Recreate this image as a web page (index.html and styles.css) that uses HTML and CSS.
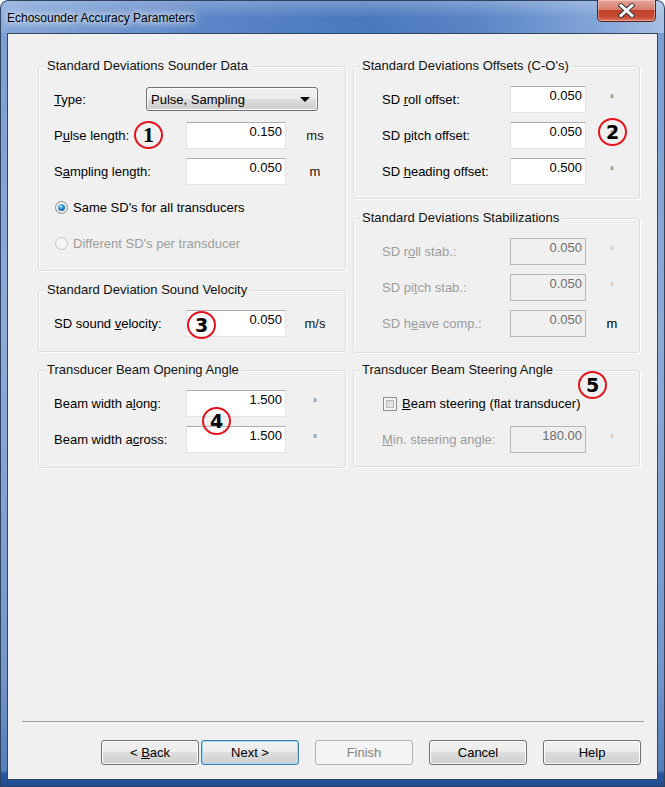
FILE: index.html
```html
<!DOCTYPE html>
<html lang="en">
  <head>
    <meta charset="UTF-8" />
    <title>Echosounder Accuracy Parameters</title>
    <link rel="stylesheet" href="styles.css">
  </head>
  <body>
    <div class="window">
      <div class="titlebar">
        <span class="title">Echosounder Accuracy Parameters</span>
        <div class="close-btn">
          <svg width="17" height="15" viewBox="0 0 17 15">
            <path d="M3 2.5 L14 12.5 M14 2.5 L3 12.5" stroke="#3b3b3b" stroke-width="5" stroke-linecap="square" />
            <path d="M3 2.5 L14 12.5 M14 2.5 L3 12.5" stroke="#fff" stroke-width="3" stroke-linecap="square" />
          </svg>
        </div>
      </div>

      <div class="client">
        <div class="groups">
          <div class="stack">
            <div class="group group-left g-sounder">
              <div class="group-title">Standard Deviations Sounder Data</div>
              <div class="rows">
                <div class="row">
                  <span class="lbl lbl-type"><u>T</u>ype:</span>
                  <div class="combo"><span>Pulse, Sampling</span><span class="arrow"></span></div>
                </div>
                <div class="row">
                  <span class="lbl">P<u>u</u>lse length:</span>
                  <div class="field">0.150</div>
                  <span class="unit">ms</span>
                </div>
                <div class="row">
                  <span class="lbl">S<u>a</u>mpling length:</span>
                  <div class="field">0.050</div>
                  <span class="unit">m</span>
                </div>
                <div class="row">
                  <span class="radio checked"></span>
                  <span>Same SD's for all transducers</span>
                </div>
                <div class="row disabled">
                  <span class="radio"></span>
                  <span>Different SD's per transducer</span>
                </div>
              </div>
            </div>

            <div class="group group-left g-velocity">
              <div class="group-title">Standard Deviation Sound Velocity</div>
              <div class="rows">
                <div class="row">
                  <span class="lbl">SD sound <u>v</u>elocity:</span>
                  <div class="field">0.050</div>
                  <span class="unit">m/s</span>
                </div>
              </div>
            </div>
          </div>

          <div class="stack">
            <div class="group group-right g-offsets">
              <div class="group-title">Standard Deviations Offsets (C-O's)</div>
              <div class="rows">
                <div class="row">
                  <span class="lbl">SD <u>r</u>oll offset:</span>
                  <div class="field">0.050</div>
                  <span class="unit deg">°</span>
                </div>
                <div class="row">
                  <span class="lbl">SD <u>p</u>itch offset:</span>
                  <div class="field">0.050</div>
                  <span class="unit deg">°</span>
                </div>
                <div class="row">
                  <span class="lbl">SD <u>h</u>eading offset:</span>
                  <div class="field">0.500</div>
                  <span class="unit deg">°</span>
                </div>
              </div>
            </div>

            <div class="group group-right g-stab">
              <div class="group-title">Standard Deviations Stabilizations</div>
              <div class="rows">
                <div class="row disabled">
                  <span class="lbl">SD r<u>o</u>ll stab.:</span>
                  <div class="field">0.050</div>
                  <span class="unit deg">°</span>
                </div>
                <div class="row disabled">
                  <span class="lbl">SD pi<u>t</u>ch stab.:</span>
                  <div class="field">0.050</div>
                  <span class="unit deg">°</span>
                </div>
                <div class="row disabled">
                  <span class="lbl">SD h<u>e</u>ave comp.:</span>
                  <div class="field">0.050</div>
                  <span class="unit unit-on">m</span>
                </div>
              </div>
            </div>
          </div>

          <div class="group group-left g-opening">
            <div class="group-title">Transducer Beam Opening Angle</div>
            <div class="rows">
              <div class="row">
                <span class="lbl">Beam width a<u>l</u>ong:</span>
                <div class="field">1.500</div>
                <span class="unit deg">°</span>
              </div>
              <div class="row">
                <span class="lbl">Beam width a<u>c</u>ross:</span>
                <div class="field">1.500</div>
                <span class="unit deg">°</span>
              </div>
            </div>
          </div>

          <div class="group group-right g-steering">
            <div class="group-title">Transducer Beam Steering Angle</div>
            <div class="rows">
              <div class="row">
                <span class="checkbox"></span>
                <span><u>B</u>eam steering (flat transducer)</span>
              </div>
              <div class="row disabled">
                <span class="lbl"><u>M</u>in. steering angle:</span>
                <div class="field">180.00</div>
                <span class="unit deg">°</span>
              </div>
            </div>
          </div>
        </div>

        <div class="footer">
          <div class="separator"></div>
          <div class="buttons">
            <div class="btn btn-back"><span>&lt; <u>B</u>ack</span></div>
            <div class="btn btn-default"><span>Next &gt;</span></div>
            <div class="btn btn-disabled"><span>Finish</span></div>
            <div class="btn"><span>Cancel</span></div>
            <div class="btn"><span>Help</span></div>
          </div>
        </div>
      </div>

      <!-- callout markers -->
      <span class="marker marker-serif" style="left: 134px; top: 121px;">1</span>
      <span class="marker" style="left: 598px; top: 118px;">2</span>
      <span class="marker" style="left: 187px; top: 311px;">3</span>
      <span class="marker" style="left: 202px; top: 407px;">4</span>
      <span class="marker" style="left: 578px; top: 371px;">5</span>
    </div>
  </body>
</html>
```

FILE: styles.css
```css
body {
  margin: 0;
  font-family: "Liberation Sans", Arial, sans-serif;
  font-size: 13px;
  color: #000;
  background-color: #fff;
}

.window {
  position: relative;
  width: 665px;
  height: 787px;
  box-sizing: border-box;
  padding: 0 7px 7px;
  border-radius: 8px 8px 0 0;
  background:
    linear-gradient(to bottom, rgba(255, 255, 255, 0.25), rgba(255, 255, 255, 0) 18px),
    linear-gradient(90deg, #86a8da 0%, #5b86c8 30%, #4b78bd 55%, #5a85c6 72%, #87a9da 92%, #a7c0e4 100%);
  background-size: 100% 33px, 100% 33px;
  background-repeat: no-repeat;
  background-color: #6f93c9;
  box-shadow: inset 0 0 0 1px #2d4161;
  overflow: hidden;
}

.window::after {
  content: "";
  position: absolute;
  left: 0;
  right: 0;
  top: 33px;
  bottom: 0;
  z-index: 0;
  border: 1px solid #2d4161;
  border-top: 0;
  background:
    linear-gradient(to bottom, rgba(0, 0, 0, 0) 738px, #2a58a0 740px, #1f4a8f 100%),
    linear-gradient(to bottom, #7c9ed2 0%, #8eabd6 40%, #7497cb 85%, #4f79b8 100%);
}

.titlebar {
  position: relative;
  z-index: 1;
  height: 33px;
  display: flex;
  justify-content: space-between;
  align-items: flex-start;
}

.title {
  margin-top: 11px;
  font-size: 12px;
  line-height: 14px;
  color: #000;
  text-shadow: 0 0 6px #fff, 0 0 10px rgba(255, 255, 255, 0.9), 0 0 14px rgba(255, 255, 255, 0.7);
}

.close-btn {
  width: 57px;
  height: 21px;
  margin-right: 2px;
  display: flex;
  align-items: center;
  justify-content: center;
  border: 1px solid #5b1f17;
  border-top: 0;
  border-radius: 0 0 5px 5px;
  background: linear-gradient(to bottom, #e6a495 0%, #d7806e 45%, #c23e27 50%, #c74a33 80%, #dc7560 100%);
  box-shadow: inset 0 0 0 1px rgba(255, 255, 255, 0.35);
}

.client {
  position: relative;
  z-index: 1;
  height: 747px;
  box-sizing: border-box;
  display: flex;
  flex-direction: column;
  border: 1px solid #34455e;
  background-color: #f0f0f0;
}

.groups {
  display: grid;
  grid-template-columns: 308px 287px;
  column-gap: 7px;
  row-gap: 17px;
  padding: 32px 0 0 30px;
}

.stack {
  display: flex;
  flex-direction: column;
  gap: 19px;
}

.group {
  box-sizing: border-box;
  border: 1px solid #d5dfe5;
  border-radius: 3px;
  box-shadow: inset 1px 1px 0 #fff, 1px 1px 0 #fff;
}

.group-title {
  display: table;
  margin: -9px 0 0 6px;
  padding: 0 2px;
  line-height: 16px;
  background-color: #f0f0f0;
  color: #111;
}

.rows {
  padding-top: 7px;
}

.row {
  height: 36px;
  display: flex;
  align-items: center;
}

.group-left .rows {
  padding-left: 15px;
}

.group-right .rows {
  padding-left: 28px;
}

.g-sounder { height: 205px; }
.g-velocity { height: 62px; }
.g-opening { height: 98px; }
.g-offsets { height: 133px; }
.g-stab { height: 135px; }
.g-steering { height: 97px; }

.lbl {
  flex: none;
  width: 132px;
}

.group-right .lbl {
  width: 128px;
}

.lbl-type {
  width: 92px !important;
}

.field {
  box-sizing: border-box;
  flex: none;
  width: 100px;
  height: 27px;
  padding: 1px 3px 0 0;
  line-height: 16px;
  text-align: right;
  background-color: #fff;
  border: 1px solid #e2e3ea;
  border-top-color: #abadb3;
}

.group-right .field {
  width: 76px;
}

.unit {
  flex: none;
  width: 58px;
  text-align: center;
  color: #111;
}

.group-right .unit {
  width: 52px;
}

.unit.deg {
  font-size: 10px;
  align-self: flex-start;
  margin-top: 12px;
  color: #3a4a66;
}

.combo {
  box-sizing: border-box;
  width: 172px;
  height: 24px;
  display: flex;
  align-items: center;
  justify-content: space-between;
  padding: 0 7px 0 4px;
  border: 1px solid #707070;
  border-radius: 3px;
  background: linear-gradient(to bottom, #f2f2f2 0%, #ebebeb 50%, #dddddd 50%, #cfcfcf 100%);
  box-shadow: inset 0 0 0 1px #fbfbfb;
}

.combo .arrow {
  width: 0;
  height: 0;
  border-left: 5px solid transparent;
  border-right: 5px solid transparent;
  border-top: 5px solid #000;
}

.radio {
  box-sizing: border-box;
  width: 13px;
  height: 13px;
  margin: 0 5px 0 1px;
  display: flex;
  align-items: center;
  justify-content: center;
  border: 1px solid #8d8d8d;
  border-radius: 50%;
  background: radial-gradient(circle at 50% 40%, #fff 20%, #d9d9d9 100%);
}

.radio.checked::after {
  content: "";
  width: 7px;
  height: 7px;
  border-radius: 50%;
  background: radial-gradient(circle at 40% 35%, #a9e6ff 0%, #2c89cf 45%, #0f3f72 100%);
}

.checkbox {
  box-sizing: border-box;
  width: 14px;
  height: 14px;
  margin: 2px 5px 0 1px;
  border: 1px solid #8f8f8f;
  background: linear-gradient(135deg, #cbcbcb, #f4f4f4);
  box-shadow: inset 0 0 0 2px #f3f3f3, inset 0 0 0 3px #b9b9b9;
}

.disabled {
  color: #9c9c9c;
}

.disabled .field {
  color: #6d6d6d;
  background-color: #f0f0f0;
  border-color: #b8b8b8;
}

.disabled .radio {
  border-color: #c4c4c4;
  background: #f4f4f4;
}

.disabled .unit.deg {
  color: #b0b0b0;
}

.disabled .unit-on {
  color: #000;
}

.footer {
  margin-top: auto;
  padding-bottom: 14px;
}

.separator {
  margin: 0 13px 0 14px;
  border-top: 1px solid #a0a0a0;
}

.buttons {
  display: flex;
  justify-content: flex-end;
  gap: 16px;
  padding: 18px 16px 0 0;
}

.btn {
  box-sizing: border-box;
  width: 98px;
  height: 25px;
  display: flex;
  align-items: center;
  justify-content: center;
  border: 1px solid #707070;
  border-radius: 3px;
  background: linear-gradient(to bottom, #f2f2f2 0%, #ebebeb 50%, #dddddd 50%, #cfcfcf 100%);
  box-shadow: inset 0 0 0 1px #fcfcfc;
}

.btn-back {
  margin-right: -14px;
}

.btn-default {
  border-color: #3c7fb1;
  box-shadow: inset 0 0 0 1px #9fdcf6;
}

.btn-disabled {
  color: #838383;
  border-color: #adb2b5;
  background: #f4f4f4;
  box-shadow: none;
}

.marker {
  position: absolute;
  z-index: 2;
  box-sizing: border-box;
  width: 29px;
  height: 28px;
  display: flex;
  align-items: center;
  justify-content: center;
  border: 2.5px solid #e3141b;
  border-radius: 50%;
  font-family: "DejaVu Sans", sans-serif;
  font-weight: bold;
  font-size: 19px;
  line-height: 1;
  color: #000;
}

.marker-serif {
  font-family: "Liberation Serif", serif;
  font-size: 22px;
}
```
